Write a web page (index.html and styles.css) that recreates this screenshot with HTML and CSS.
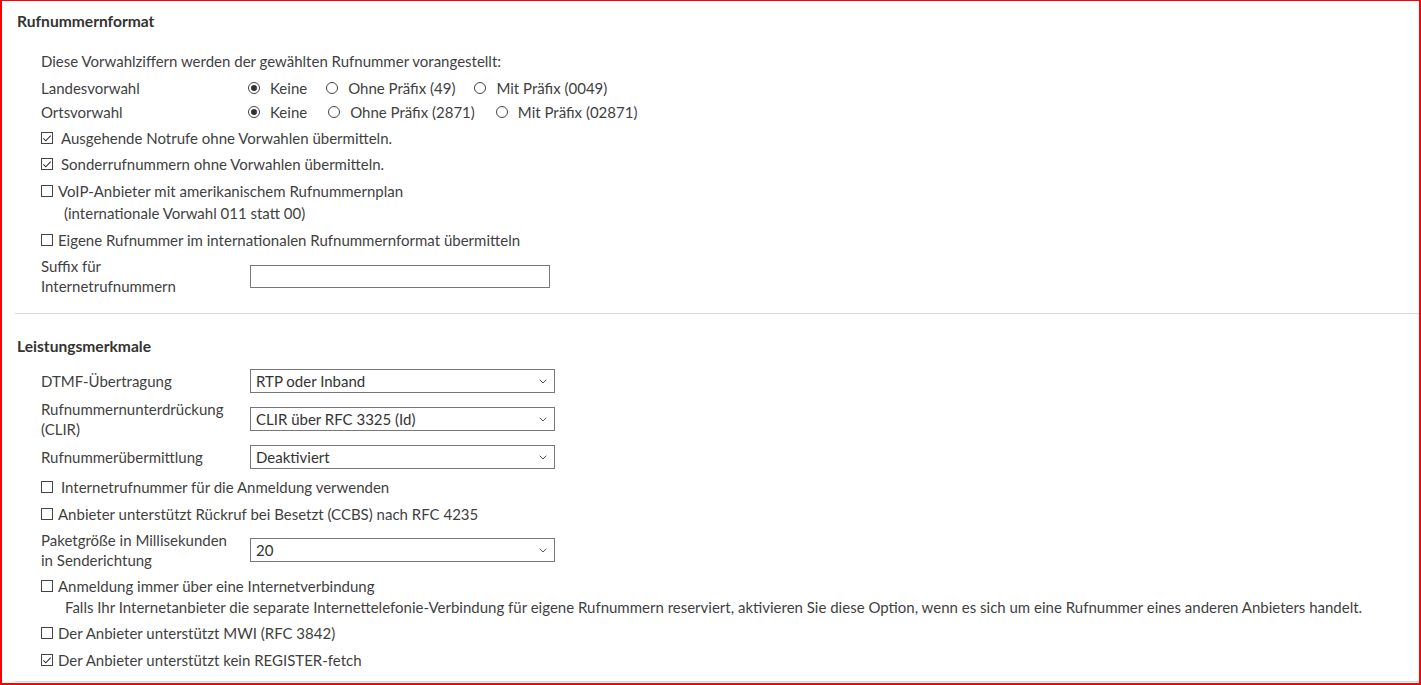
FILE: index.html
```html
<!DOCTYPE html>
<html lang="de">
<head>
<meta charset="utf-8">
<title>Rufnummernformat</title>
<link rel="stylesheet" href="styles.css">
</head>
<body>
<div class="page">
  <section class="sect sect-1">
    <h2 class="title">Rufnummernformat</h2>
    <div class="body">
      <p class="intro">Diese Vorwahlziffern werden der gewählten Rufnummer vorangestellt:</p>
      <div class="radio-row">
        <span class="lbl">Landesvorwahl</span>
        <span class="opt"><span class="radio on"></span><span class="opt-text">Keine</span></span>
        <span class="opt"><span class="radio"></span><span class="opt-text">Ohne Präfix (49)</span></span>
        <span class="opt"><span class="radio"></span><span class="opt-text">Mit Präfix (0049)</span></span>
      </div>
      <div class="radio-row r2">
        <span class="lbl">Ortsvorwahl</span>
        <span class="opt"><span class="radio on"></span><span class="opt-text">Keine</span></span>
        <span class="opt"><span class="radio"></span><span class="opt-text">Ohne Präfix (2871)</span></span>
        <span class="opt"><span class="radio"></span><span class="opt-text">Mit Präfix (02871)</span></span>
      </div>
      <div class="cb-row m4 wide">
        <span class="cb on"><svg viewBox="0 0 12 12" width="11" height="11"><path d="M1.6 5.8 L4.6 8.8 L10.4 2.6" fill="none" stroke="#333" stroke-width="1.3"/></svg></span>
        <span class="cb-text">Ausgehende Notrufe ohne Vorwahlen übermitteln.</span>
      </div>
      <div class="cb-row m6 wide">
        <span class="cb on"><svg viewBox="0 0 12 12" width="11" height="11"><path d="M1.6 5.8 L4.6 8.8 L10.4 2.6" fill="none" stroke="#333" stroke-width="1.3"/></svg></span>
        <span class="cb-text">Sonderrufnummern ohne Vorwahlen übermitteln.</span>
      </div>
      <div class="cb-row m6 two">
        <span class="cb"></span>
        <span class="cb-text">VoIP-Anbieter mit amerikanischem Rufnummernplan<span class="sub">(internationale Vorwahl 011 statt 00)</span></span>
      </div>
      <div class="cb-row m6">
        <span class="cb"></span>
        <span class="cb-text">Eigene Rufnummer im internationalen Rufnummernformat übermitteln</span>
      </div>
      <div class="field-row m6">
        <span class="lbl two-line">Suffix für<br>Internetrufnummern</span>
        <span class="input"></span>
      </div>
    </div>
  </section>
  <div class="sep"></div>
  <section class="sect sect-2">
    <h2 class="title">Leistungsmerkmale</h2>
    <div class="body">
      <div class="field-row m13">
        <span class="lbl">DTMF-Übertragung</span>
        <span class="select"><span class="sel-text">RTP oder Inband</span><svg class="chev" viewBox="0 0 8 5" width="8" height="5"><path d="M0.7 0.7 L4 4 L7.3 0.7" fill="none" stroke="#555" stroke-width="1"/></svg></span>
      </div>
      <div class="field-row m6">
        <span class="lbl two-line">Rufnummernunterdrückung<br>(CLIR)</span>
        <span class="select"><span class="sel-text">CLIR über RFC 3325 (Id)</span><svg class="chev" viewBox="0 0 8 5" width="8" height="5"><path d="M0.7 0.7 L4 4 L7.3 0.7" fill="none" stroke="#555" stroke-width="1"/></svg></span>
      </div>
      <div class="field-row m6">
        <span class="lbl">Rufnummerübermittlung</span>
        <span class="select"><span class="sel-text">Deaktiviert</span><svg class="chev" viewBox="0 0 8 5" width="8" height="5"><path d="M0.7 0.7 L4 4 L7.3 0.7" fill="none" stroke="#555" stroke-width="1"/></svg></span>
      </div>
      <div class="cb-row m8 wide">
        <span class="cb"></span>
        <span class="cb-text">Internetrufnummer für die Anmeldung verwenden</span>
      </div>
      <div class="cb-row m7">
        <span class="cb"></span>
        <span class="cb-text">Anbieter unterstützt Rückruf bei Besetzt (CCBS) nach RFC 4235</span>
      </div>
      <div class="field-row m6">
        <span class="lbl two-line">Paketgröße in Millisekunden<br>in Senderichtung</span>
        <span class="select"><span class="sel-text">20</span><svg class="chev" viewBox="0 0 8 5" width="8" height="5"><path d="M0.7 0.7 L4 4 L7.3 0.7" fill="none" stroke="#555" stroke-width="1"/></svg></span>
      </div>
      <div class="cb-row m6 two21">
        <span class="cb"></span>
        <span class="cb-text">Anmeldung immer über eine Internetverbindung<span class="sub">Falls Ihr Internetanbieter die separate Internettelefonie-Verbindung für eigene Rufnummern reserviert, aktivieren Sie diese Option, wenn es sich um eine Rufnummer eines anderen Anbieters handelt.</span></span>
      </div>
      <div class="cb-row m5">
        <span class="cb"></span>
        <span class="cb-text">Der Anbieter unterstützt MWI (RFC 3842)</span>
      </div>
      <div class="cb-row m7">
        <span class="cb on"><svg viewBox="0 0 12 12" width="11" height="11"><path d="M1.6 5.8 L4.6 8.8 L10.4 2.6" fill="none" stroke="#333" stroke-width="1.3"/></svg></span>
        <span class="cb-text">Der Anbieter unterstützt kein REGISTER-fetch</span>
      </div>
    </div>
  </section>
  <div class="sep"></div>
</div>
</body>
</html>
```
FILE: styles.css
```css
* { box-sizing: border-box; }
html, body { margin: 0; padding: 0; background: #fff; }
body {
  font-family: Lato, "Liberation Sans", sans-serif;
  font-size: 15px;
  color: #3f3f3f;
}
.page {
  width: 1421px;
  height: 685px;
  border: 1px solid #f00;
  border-left-width: 2px;
  border-right-width: 2px;
  border-bottom-width: 2px;
  overflow: hidden;
}
.sect { padding-left: 15px; }
.sect-1 { padding-top: 10px; padding-bottom: 17px; }
.sect-2 { padding-top: 22px; padding-bottom: 11px; }
.title {
  margin: 0;
  font-size: 15.6px;
  font-weight: 700;
  line-height: 20px;
  color: #333;
}
.body { padding-left: 24px; display: flex; flex-direction: column; }
.intro { margin: 20px 0 5px; line-height: 20px; }
.radio-row { display: flex; align-items: center; height: 24px; }
.lbl { width: 209px; flex: none; line-height: 20px; }
.opt { display: flex; align-items: center; margin-right: 21px; }
.r2 .opt { margin-right: 23px; }
.radio {
  width: 12px; height: 12px;
  border: 1px solid #444;
  border-radius: 50%;
  margin-left: -2px;
  margin-right: 10px;
  display: flex; align-items: center; justify-content: center;
}
.radio.on::after {
  content: "";
  width: 6px; height: 6px;
  border-radius: 50%;
  background: #333;
}
.cb-row { display: flex; align-items: flex-start; line-height: 20px; }
.cb {
  width: 12px; height: 12px;
  flex: none;
  border: 1px solid #444;
  margin-top: 4px;
  margin-right: 5px;
  display: flex; align-items: center; justify-content: center;
}
.wide .cb { margin-right: 8px; }
.two { line-height: 22px; }
.two .cb { margin-top: 5px; }
.two21 { line-height: 21px; }
.two21 .cb { margin-top: 4px; }
.sub { display: block; padding-left: 6px; }
.two21 .sub { padding-left: 7px; }
.field-row { display: flex; align-items: center; }
.field-row > .lbl { min-height: 24px; display: flex; align-items: center; }
.two-line { display: block !important; }
.input {
  width: 300px; height: 23px;
  border: 1px solid #777;
  background: #fff;
}
.select {
  width: 305px; height: 24px;
  border: 1px solid #777;
  display: flex; align-items: center; justify-content: space-between;
  padding: 0 7px 0 5px;
  color: #333;
}
.m4 { margin-top: 4px; }
.m5 { margin-top: 5px; }
.m6 { margin-top: 6px; }
.m7 { margin-top: 7px; }
.m8 { margin-top: 8px; }
.m13 { margin-top: 13px; }
.sep { height: 1px; background: #d6d6d6; margin-left: 13px; }
```
